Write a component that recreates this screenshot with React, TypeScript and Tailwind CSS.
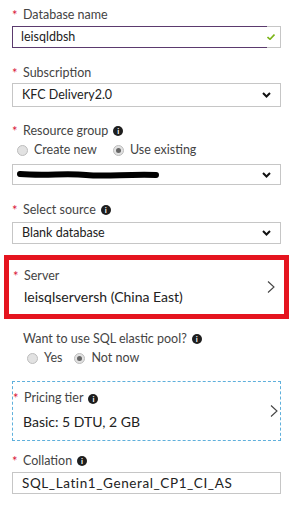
import React from "react";

const font = { fontFamily: "Lato, 'Open Sans', sans-serif" };

function Star() {
  return <span className="text-[#d9163a] text-[13px] w-[11px] inline-block leading-none">*</span>;
}

function Info() {
  return (
    <span className="ml-[5px] inline-flex items-center justify-center w-[10px] h-[10px] rounded-full bg-[#1e1e1e] text-white text-[8px] font-bold leading-none">
      i
    </span>
  );
}

function Label({ text, required = true, info = false }: { text: string; required?: boolean; info?: boolean }) {
  return (
    <div className="flex items-center h-[16px] text-[12.5px] text-[#444] pl-[12px]">
      {required ? <Star /> : <span className="w-[11px]" />}
      <span>{text}</span>
      {info && <Info />}
    </div>
  );
}

function Chevron() {
  return (
    <svg width="9" height="6" viewBox="0 0 9 6" className="mr-[9px]">
      <path d="M1 1 L4.5 4.5 L8 1" fill="none" stroke="#111" strokeWidth="2" />
    </svg>
  );
}

function Arrow() {
  return (
    <svg width="8" height="12" viewBox="0 0 8 12">
      <path d="M1 0.5 L7 6 L1 11.5" fill="none" stroke="#444" strokeWidth="1.1" />
    </svg>
  );
}

function Select({ children, h, pl = "pl-[9px]" }: { children: React.ReactNode; h: string; pl?: string }) {
  return (
    <div className={`mx-[12px] ${h} border border-[#c6c6c6] flex items-center justify-between ${pl} text-[12.5px] text-[#222]`}>
      <div className="flex-1 flex items-center">{children}</div>
      <Chevron />
    </div>
  );
}

function Radio({ label, checked }: { label: string; checked?: boolean }) {
  return (
    <div className="flex items-center gap-[6px]">
      <span className="w-[11px] h-[11px] rounded-full border border-[#bdbdbd] bg-[#e2e2e2] flex items-center justify-center">
        {checked && <span className="w-[5px] h-[5px] rounded-full bg-[#666]" />}
      </span>
      <span className="text-[12.5px] text-[#444]">{label}</span>
    </div>
  );
}

export default function App() {
  return (
    <div className="w-[293px] h-[505px] bg-white overflow-hidden pt-[7px]" style={font}>
      <Label text="Database name" />
      <div className="mx-[12px] mt-[3px] h-[22px] flex">
        <div className="flex-1 border border-r-0 border-[#5b3a6e] flex items-center pl-[8px] text-[12.5px] text-[#222]">
          leisqldbsh
        </div>
        <div className="w-[14px] border border-l-0 border-[#c6c6c6] flex items-center justify-start">
          <svg width="8" height="6" viewBox="0 0 8 6">
            <path d="M0.5 3 L3 5.3 L7.5 0.5" fill="none" stroke="#7cb518" strokeWidth="1.6" />
          </svg>
        </div>
      </div>

      <div className="mt-[17px]">
        <Label text="Subscription" />
      </div>
      <div className="mt-[2px]">
        <Select h="h-[24px]">KFC Delivery2.0</Select>
      </div>

      <div className="mt-[16px]">
        <Label text="Resource group" info />
      </div>
      <div className="mt-[3px] h-[16px] flex items-center gap-[16px] pl-[17px]">
        <Radio label="Create new" />
        <Radio label="Use existing" checked />
      </div>
      <div className="mt-[6px]">
        <Select h="h-[21px]" pl="pl-[3px]">
          <svg width="146" height="10" viewBox="0 0 146 10">
            <path
              d="M4 4 C30 6 50 3 70 5 C90 7 110 4 140 5"
              fill="none"
              stroke="#000"
              strokeWidth="6"
              strokeLinecap="round"
            />
          </svg>
        </Select>
      </div>

      <div className="mt-[17px]">
        <Label text="Select source" info />
      </div>
      <div className="mt-[4px]">
        <Select h="h-[22px]">Blank database</Select>
      </div>

      <div className="mt-[11px] ml-[4px] w-[285px] h-[64px] border-[5px] border-[#e5141f] flex items-center justify-between pr-[9px]">
        <div className="flex flex-col">
          <div className="flex items-center h-[16px] text-[12.5px] text-[#444] pl-[4px]">
            <Star />
            <span>Server</span>
          </div>
          <div className="mt-[2px] h-[20px] flex items-center pl-[15px] text-[14px] text-[#222]">
            leisqlserversh (China East)
          </div>
        </div>
        <Arrow />
      </div>

      <div className="mt-[12px]">
        <Label text="Want to use SQL elastic pool?" required={false} info />
      </div>
      <div className="mt-[3px] h-[16px] flex items-center gap-[12px] pl-[27px]">
        <Radio label="Yes" />
        <Radio label="Not now" checked />
      </div>

      <div className="mt-[15px] mx-[12px] h-[60px] border border-dashed border-[#5fb0dc] flex items-center justify-between pr-[2px]">
        <div className="flex flex-col">
          <div className="flex items-center h-[16px] text-[12.5px] text-[#444]">
            <Star />
            <span>Pricing tier</span>
            <Info />
          </div>
          <div className="mt-[5px] h-[20px] flex items-center pl-[10px] text-[14px] text-[#222]">
            Basic: 5 DTU, 2 GB
          </div>
        </div>
        <Arrow />
      </div>

      <div className="mt-[12px]">
        <Label text="Collation" info />
      </div>
      <div className="mt-[3px] mx-[12px] h-[22px] border border-[#c6c6c6] flex items-center pl-[9px] text-[13.5px] tracking-[0.6px] text-[#222]">
        SQL_Latin1_General_CP1_CI_AS
      </div>
    </div>
  );
}
